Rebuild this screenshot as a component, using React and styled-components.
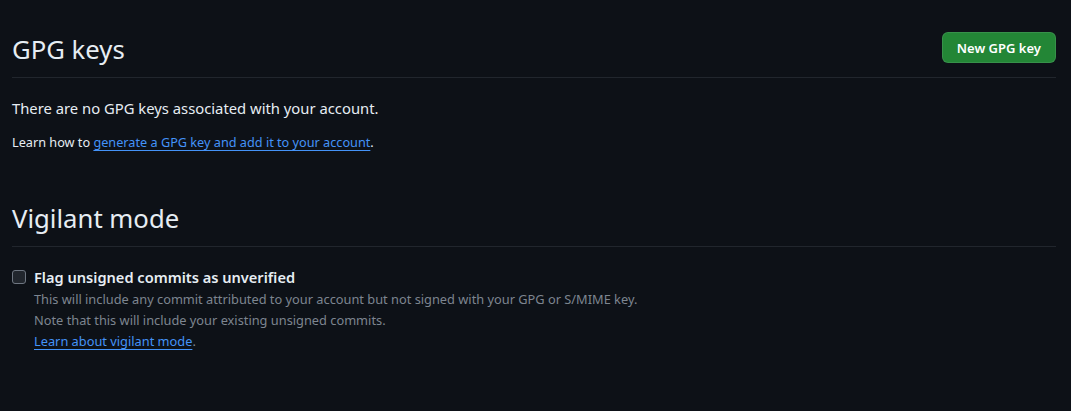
import React from 'react';
import styled, { createGlobalStyle } from 'styled-components';

const GlobalStyle = createGlobalStyle`
  body {
    margin: 0;
    background: #0d1117;
    color: #e6edf3;
    font-family: "Noto Sans", "Open Sans", sans-serif;
  }
`;

const Page = styled.div`
  padding: 31px 15px 40px 12px;
`;

const Subhead = styled.div`
  display: flex;
  align-items: flex-start;
  padding-bottom: 8px;
  margin-bottom: 19px;
  border-bottom: 1px solid #21262d;
  margin-top: ${props => (props.spaced ? '48px' : '0')};
`;

const Heading = styled.h2`
  flex: 1;
  margin: 0;
  font-size: 25.7px;
  font-weight: 400;
  line-height: 38px;
  color: #e6edf3;
`;

const Button = styled.button`
  height: 31px;
  margin-top: 1px;
  padding: 0 14px;
  border: 1px solid rgba(240, 246, 252, 0.1);
  border-radius: 6px;
  background: #238636;
  color: #ffffff;
  font-family: inherit;
  font-size: 13px;
  font-weight: 600;
`;

const Text = styled.p`
  margin: 0 0 ${props => props.gap || '0'};
  font-size: ${props => props.size || '14.8px'};
  line-height: ${props => props.lh || '22px'};
`;

const Link = styled.a`
  color: #4493f8;
  text-decoration: underline;
  text-underline-offset: 3px;
`;

const CheckRow = styled.div`
  display: flex;
  align-items: flex-start;
  gap: 8px;
`;

const Box = styled.span`
  flex: none;
  width: 14px;
  height: 14px;
  margin-top: 4px;
  box-sizing: border-box;
  border: 1px solid #6e7681;
  border-radius: 3px;
  background: #21262d;
`;

const Label = styled.div`
  font-size: 14.6px;
  font-weight: 600;
  line-height: 23px;
`;

const Note = styled.div`
  font-size: 12.8px;
  line-height: 21px;
  color: #7d8590;
`;

export default function App() {
  return (
    <Page>
      <GlobalStyle />
      <Subhead>
        <Heading>GPG keys</Heading>
        <Button>New GPG key</Button>
      </Subhead>
      <Text gap="14px">There are no GPG keys associated with your account.</Text>
      <Text size="12.7px" lh="19px">
        Learn how to <Link href="#">generate a GPG key and add it to your account</Link>.
      </Text>

      <Subhead spaced>
        <Heading>Vigilant mode</Heading>
      </Subhead>
      <CheckRow>
        <Box />
        <div>
          <Label>Flag unsigned commits as unverified</Label>
          <Note>This will include any commit attributed to your account but not signed with your GPG or S/MIME key.</Note>
          <Note>Note that this will include your existing unsigned commits.</Note>
          <Note>
            <Link href="#">Learn about vigilant mode</Link>.
          </Note>
        </div>
      </CheckRow>
    </Page>
  );
}
